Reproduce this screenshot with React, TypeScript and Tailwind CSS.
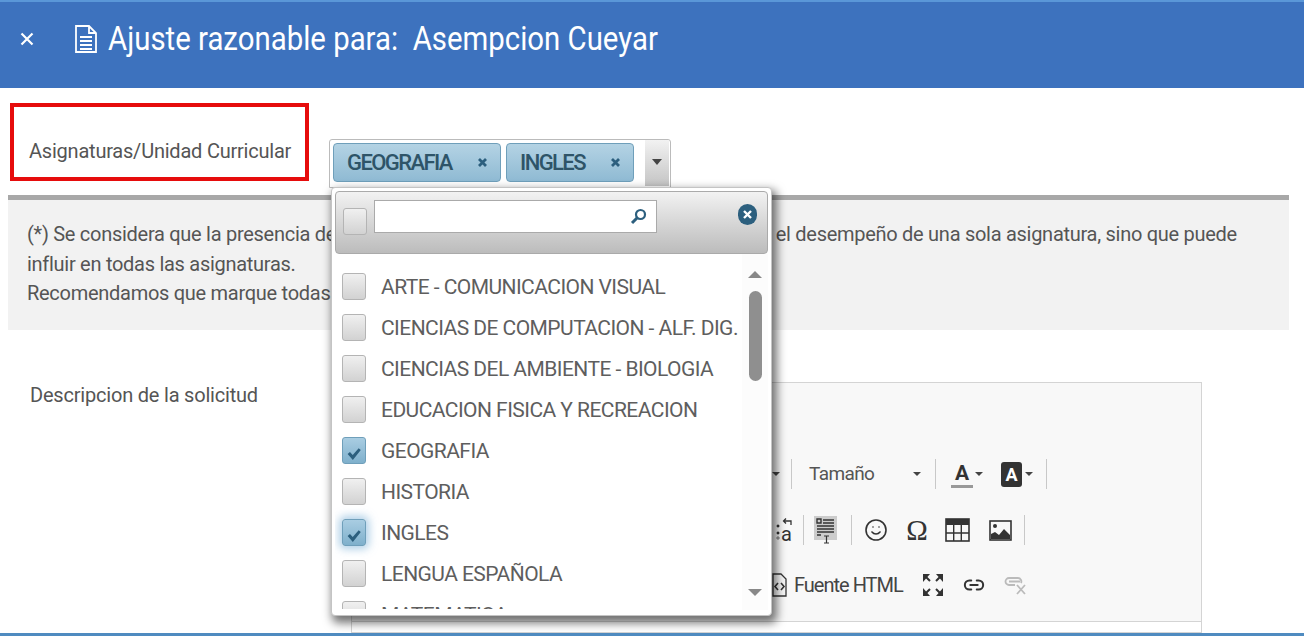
import { Link2, Smile } from 'lucide-react';

const materias = [
  { name: 'ARTE - COMUNICACION VISUAL', on: false },
  { name: 'CIENCIAS DE COMPUTACION - ALF. DIG.', on: false },
  { name: 'CIENCIAS DEL AMBIENTE - BIOLOGIA', on: false },
  { name: 'EDUCACION FISICA Y RECREACION', on: false },
  { name: 'GEOGRAFIA', on: true },
  { name: 'HISTORIA', on: false },
  { name: 'INGLES', on: true, glow: true },
  { name: 'LENGUA ESPAÑOLA', on: false },
  { name: 'MATEMATICA', on: false },
];

const Caret = ({ className = '' }: { className?: string }) => (
  <span className={`inline-block flex-none w-0 h-0 border-x-[4px] border-x-transparent border-t-[4px] border-t-[#444] ${className}`} />
);

const Sep = ({ className = '' }: { className?: string }) => <span className={`flex-none w-px h-[30px] bg-[#c8c8c8] ${className}`} />;

const Check = ({ on, glow }: { on: boolean; glow?: boolean }) => (
  <span
    className={`flex-none flex items-end justify-center w-[24px] h-[27px] rounded-[3px] border ${
      on
        ? 'border-[#6f9fba] bg-gradient-to-b from-[#a9cde2] to-[#7fb0cc]'
        : 'border-[#b4b4b4] bg-gradient-to-b from-[#f0f0f0] to-[#d2d2d2]'
    } ${glow ? 'shadow-[0_0_8px_3px_rgba(120,175,215,0.6)]' : ''}`}
  >
    {on && (
      <svg width="18" height="17" viewBox="0 0 16 16" className="mb-[1px]">
        <path d="M2 8.5l2.2-2 2.6 3L12.4 3l2 1.7L6.9 14z" fill="#2c5f7e" />
      </svg>
    )}
  </span>
);

const Chip = ({ label, className }: { label: string; className: string }) => (
  <span className={`flex items-center justify-between h-[39px] pl-[13px] pr-[12px] rounded-[4px] border border-[#6f9fba] bg-gradient-to-b from-[#b4d3e4] to-[#8fbad3] text-[#2e5468] text-[22px] font-medium tracking-[-1.6px] ${className}`}>
    {label}
    <svg width="11" height="11" viewBox="0 0 11 11">
      <path d="M2 2l7 7M9 2l-7 7" stroke="#2c5f7e" strokeWidth="2.8" />
    </svg>
  </span>
);

export default function App() {
  return (
    <div className="relative flex flex-col w-[1304px] h-[636px] overflow-hidden bg-white text-[#555] font-['Roboto',sans-serif]">
      <div className="flex-none flex items-center h-[88px] pb-[12px] border-t-[2px] border-[#5a97d8] bg-[#3d72be] text-white">
        <svg width="14" height="14" viewBox="0 0 14 14" className="ml-[20px]">
          <path d="M1.5 1.5l11 11M12.5 1.5l-11 11" stroke="white" strokeWidth="2.2" />
        </svg>
        <svg width="24" height="30" viewBox="0 0 24 30" className="ml-[40px]">
          <path d="M2 2h13l7 7v19H2z M15 2v7h7" fill="none" stroke="white" strokeWidth="1.8" />
          <path d="M6 13h12M6 17h12M6 21h12M6 25h12" stroke="white" strokeWidth="1.8" />
        </svg>
        <span className="ml-[10px] text-[33px] scale-x-[0.89] origin-left whitespace-pre">Ajuste razonable para:  Asempcion Cueyar</span>
      </div>

      <div className="flex-none flex h-[107px] pl-[10px] pt-[15px]">
        <div className="flex items-end w-[299px] h-[78px] border-[4px] border-[#e60c0c] pl-[15px] pb-[11px] text-[20px] tracking-[-0.22px]">
          Asignaturas/Unidad Curricular
        </div>
        <div className="flex w-[342px] h-[49px] ml-[20px] mt-[36px] border border-[#bbb] rounded-t-[3px] pl-[3px] pt-[3px]">
          <Chip label="GEOGRAFIA" className="w-[168px]" />
          <Chip label="INGLES" className="w-[128px] ml-[5px]" />
          <span className="flex items-start justify-center w-[24px] h-[46px] ml-[11px] -mt-[3px] pt-[19px] bg-gradient-to-b from-[#f2f2f2] to-[#c4c4c4]">
            <Caret className="border-t-[#2c5f7e] border-x-[5px] border-t-[6px]" />
          </span>
        </div>
      </div>

      <div className="flex-none ml-[8px] mr-[15px] h-[135px] border-t-[5px] border-[#a8a8a8] bg-[#f2f2f2] pl-[19px] pt-[20px] text-[20px] leading-[29.5px] tracking-[-0.28px] whitespace-nowrap">
        (*) Se considera que la presencia de una discapacidad no repercute exclusivamente en el desempeño de una sola asignatura, sino que puede
        <br />
        influir en todas las asignaturas.
        <br />
        Recomendamos que marque todas las asignaturas.
      </div>

      <div className="flex-1 min-h-0 flex pt-[52px] overflow-hidden">
        <div className="w-[351px] pl-[30px] pt-[1px] text-[20px] leading-[24px] tracking-[-0.2px]">Descripcion de la solicitud</div>
        <div className="w-[851px] border border-[#d4d4d4]">
          <div className="flex flex-col h-[239px] pt-[75px] pl-[420px] bg-[#f8f8f8] border-b border-[#d4d4d4] text-[#555]">
            <div className="flex items-center h-[32px]">
              <Caret />
              <Sep className="ml-[11px]" />
              <span className="ml-[17px] w-[100px] text-[19px] tracking-[-0.6px]">Tamaño</span>
              <Caret className="ml-[4px]" />
              <Sep className="ml-[14px]" />
              <span className="ml-[15px] flex flex-col items-center w-[22px] text-[#333]">
                <span className="text-[21px] leading-[24px] font-bold">A</span>
                <span className="w-[22px] h-[3px] bg-[#999]" />
              </span>
              <Caret className="ml-[2px]" />
              <span className="ml-[18px] flex items-center justify-center w-[21px] h-[25px] rounded-[3px] bg-[#333] text-white text-[18px] font-bold">A</span>
              <Caret className="ml-[3px]" />
              <Sep className="ml-[13px]" />
            </div>
            <div className="flex items-center h-[32px] mt-[24px] text-[#333]">
              <span className="flex items-end justify-end w-[20px]">
                <svg width="5" height="22" viewBox="0 0 5 22" className="flex-none">
                  <path d="M1 5h2v2H1zM1 12h2v2H1zM0 18h4M2 16v4" fill="#333" stroke="#333" strokeWidth="0.6" />
                </svg>
                <span className="flex flex-col items-end">
                  <svg width="10" height="8" viewBox="0 0 10 8">
                    <path d="M9 7V3H2M4 0.5L1.5 3 4 5.5" fill="none" stroke="#333" strokeWidth="1.3" />
                  </svg>
                  <span className="text-[20px] leading-[16px]">a</span>
                </span>
              </span>
              <Sep className="ml-[11px]" />
              <svg width="24" height="28" viewBox="0 0 24 28" className="flex-none ml-[10px]">
                <rect x="0" y="0" width="23" height="24" fill="#ccc" />
                <path d="M3 3h4v4H3zM9 4h11M9 7h11M3 10h17M3 13h17M3 16h17M3 19h4" stroke="#333" strokeWidth="1.4" fill="none" />
                <path d="M10 20h5M12.5 20v7M10 27h5" stroke="#333" strokeWidth="1.2" />
              </svg>
              <Sep className="ml-[13px]" />
              <Smile size={24} strokeWidth={1.6} className="flex-none ml-[12px]" />
              <span className="flex-none ml-[13px] w-[32px] text-center text-[29px] leading-none font-['Liberation_Serif',serif]">Ω</span>
              <svg width="25" height="24" viewBox="0 0 25 24" className="flex-none ml-[12px]">
                <rect x="1" y="1" width="23" height="22" fill="none" stroke="#333" strokeWidth="1.6" />
                <rect x="1" y="1" width="23" height="6" fill="#333" />
                <path d="M8.7 7v16M16.3 7v16M1 15h23" stroke="#333" strokeWidth="1.4" />
              </svg>
              <svg width="23" height="21" viewBox="0 0 23 21" className="flex-none ml-[19px]">
                <rect x="1" y="1" width="21" height="19" fill="none" stroke="#333" strokeWidth="1.6" />
                <circle cx="6" cy="6" r="2" fill="#333" />
                <path d="M2 19v-5l4-2 4 3 5-6 6 6v4z" fill="#333" />
              </svg>
              <Sep className="ml-[12px]" />
            </div>
            <div className="flex items-center h-[32px] mt-[23px] text-[#333]">
              <svg width="15" height="24" viewBox="0 0 15 24" className="flex-none">
                <path d="M1 1h8l5 5v17H1z" fill="none" stroke="#333" strokeWidth="1.3" />
                <path d="M6 10l-3 3.5 3 3.5M9 10l3 3.5-3 3.5" fill="none" stroke="#333" strokeWidth="1.6" />
              </svg>
              <span className="flex-none ml-[7px] w-[108px] text-[20px] tracking-[-1px] text-[#444] whitespace-nowrap">Fuente HTML</span>
              <svg width="22" height="24" viewBox="0 0 22 24" className="flex-none ml-[20px]">
                <path d="M1 1h7L1 9zM21 1h-7l7 8zM1 23h7l-7-8zM21 23h-7l7-8z" fill="#333" />
                <path d="M3 3l5 5M19 3l-5 5M3 21l5-5M19 21l-5-5" stroke="#333" strokeWidth="2" />
              </svg>
              <Link2 size={22} strokeWidth={2.2} className="flex-none ml-[19px]" />
              <svg width="24" height="22" viewBox="0 0 24 22" className="flex-none ml-[19px]">
                <path d="M8 11H5a3.5 3.5 0 0 1 0-7h9a3.5 3.5 0 0 1 3 5M5 7.500h11M11 11H6" fill="none" stroke="#bbb" strokeWidth="1.8" />
                <path d="M13 11l8 9M21 11l-8 9" stroke="#bbb" strokeWidth="1.8" />
              </svg>
            </div>
          </div>
        </div>
      </div>

      <div className="flex-none h-[3px] bg-[#4f8bc0]" />

      {/* menu del multiselect */}
      <div className="absolute left-[331px] top-[187px] w-[441px] h-[429px] bg-white border border-[#c4c4c4] rounded-[4px] p-[3px] shadow-[3px_5px_10px_2px_rgba(0,0,0,0.55)]">
        <div className="relative flex h-[63px] pl-[7px] pt-[8px] rounded-[4px] border border-[#aaa] bg-gradient-to-b from-[#f2f2f2] to-[#bcbcbc]">
          <span className="mt-[8px]">
            <Check on={false} />
          </span>
          <div className="flex items-center justify-end w-[283px] h-[33px] ml-[7px] pr-[9px] bg-white border border-[#aaa]">
            <svg width="17" height="17" viewBox="0 0 17 17">
              <circle cx="10.500" cy="6.500" r="4.500" fill="none" stroke="#2c5f7e" strokeWidth="2.200" />
              <path d="M7 10l-5 5" stroke="#2c5f7e" strokeWidth="3" />
            </svg>
          </div>
          <span className="absolute right-[10px] top-[12px] flex items-center justify-center w-[19px] h-[21px] rounded-full bg-[#2c5f7e]">
            <svg width="9" height="9" viewBox="0 0 9 9">
              <path d="M1 1l7 7M8 1l-7 7" stroke="white" strokeWidth="2.4" />
            </svg>
          </span>
        </div>
        <div className="relative h-[356px]">
          <div className="h-[355px] overflow-hidden">
            <div className="flex flex-col pl-[7px] pt-[19px] gap-[14px]">
              {materias.map(m => (
                <div key={m.name} className="flex items-center h-[27px]">
                  <Check on={m.on} glow={m.glow} />
                  <span className="ml-[15px] mt-[2px] text-[21px] text-[#5e5e5e] tracking-[-0.55px] whitespace-nowrap">{m.name}</span>
                </div>
              ))}
            </div>
          </div>
          <div className="absolute right-0 top-0 bottom-0 flex flex-col items-center w-[26px] pt-[17px] bg-[#fcfcfc]">
            <span className="w-0 h-0 border-x-[7px] border-x-transparent border-b-[7px] border-b-[#888]" />
            <span className="w-[13px] h-[90px] mt-[13px] rounded-full bg-[#8f8f8f]" />
            <span className="mt-[208px] w-0 h-0 border-x-[7px] border-x-transparent border-t-[7px] border-t-[#888]" />
          </div>
        </div>
      </div>
    </div>
  );
}
